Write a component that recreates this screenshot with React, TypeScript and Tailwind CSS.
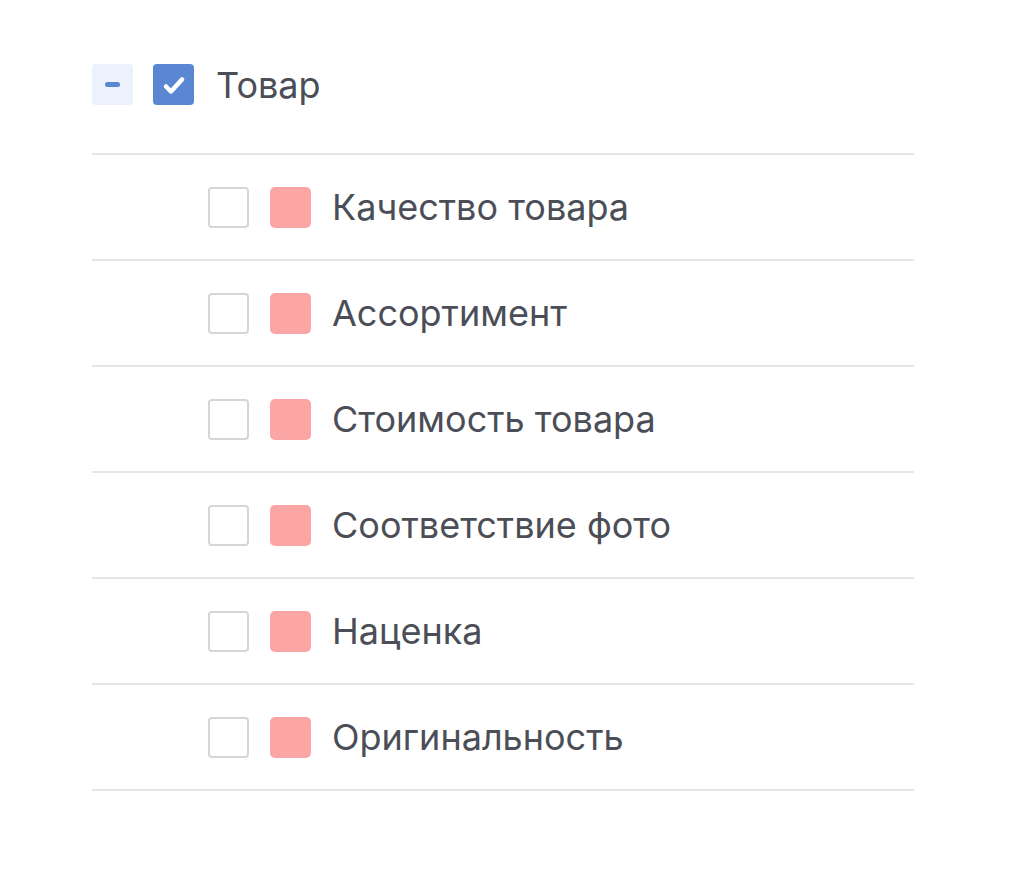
const items = [
  "Качество товара",
  "Ассортимент",
  "Стоимость товара",
  "Соответствие фото",
  "Наценка",
  "Оригинальность",
];

export default function App() {
  return (
    <div className="min-h-[870px] w-[1024px] bg-white pl-[92px] pt-[64px] font-['Inter',sans-serif] text-[#4b4e57]">
      <div className="w-[822px]">
        {/* Parent row */}
        <div className="flex h-[41px] items-center">
          <div className="flex h-[41px] w-[41px] items-center justify-center rounded-[4px] bg-[#ebf1fd]">
            <div className="h-[5px] w-[15px] rounded-full bg-[#5b86d1]" />
          </div>
          <div className="ml-[20px] flex h-[41px] w-[41px] items-center justify-center rounded-[4px] bg-[#5b86d1]">
            <svg width="41" height="41" viewBox="0 0 41 41" fill="none">
              <path
                d="M13 22.5 L18 27.5 L29 15.5"
                stroke="white"
                strokeWidth="4.5"
                strokeLinecap="round"
                strokeLinejoin="round"
              />
            </svg>
          </div>
          <span className="ml-[22px] text-[36px] leading-none">Товар</span>
        </div>
        <div className="mt-[48px] border-b-2 border-[#e6e6e6]" />

        {items.map((label) => (
          <div key={label} className="flex h-[106px] items-center border-b-2 border-[#e6e6e6] pl-[116px]">
            <div className="h-[41px] w-[41px] rounded-[4px] border-2 border-[#d5d6d9] bg-white" />
            <div className="ml-[21px] h-[41px] w-[41px] rounded-[5px] bg-[#fca5a5]" />
            <span className="ml-[21px] text-[36px] leading-none">{label}</span>
          </div>
        ))}
      </div>
    </div>
  );
}
